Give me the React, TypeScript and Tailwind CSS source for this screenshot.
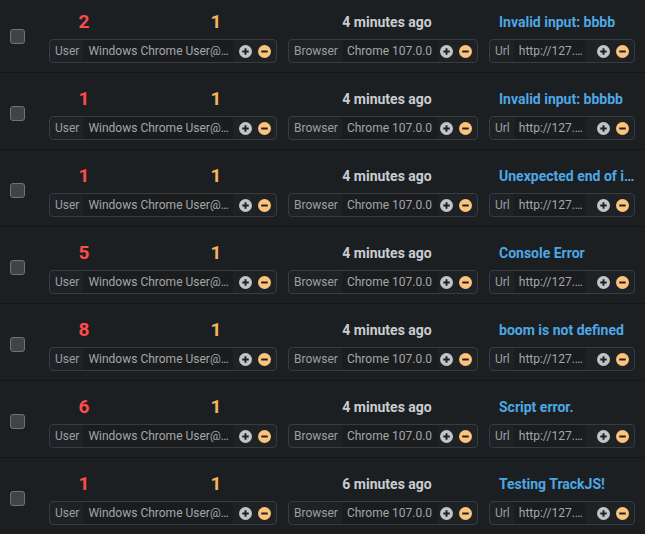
import React from "react"

type Row = {
  count: number
  users: number
  time: string
  message: string
}

const rows: Row[] = [
  { count: 2, users: 1, time: "4 minutes ago", message: "Invalid input: bbbb" },
  { count: 1, users: 1, time: "4 minutes ago", message: "Invalid input: bbbbb" },
  { count: 1, users: 1, time: "4 minutes ago", message: "Unexpected end of input" },
  { count: 5, users: 1, time: "4 minutes ago", message: "Console Error" },
  { count: 8, users: 1, time: "4 minutes ago", message: "boom is not defined" },
  { count: 6, users: 1, time: "4 minutes ago", message: "Script error." },
  { count: 1, users: 1, time: "6 minutes ago", message: "Testing TrackJS!" },
]

function PlusIcon() {
  return (
    <svg width="13" height="13" viewBox="0 0 16 16" className="shrink-0">
      <circle cx="8" cy="8" r="8" fill="#c2c5c8" />
      <path d="M8 4v8M4 8h8" stroke="#1d2022" strokeWidth="2.4" strokeLinecap="butt" />
    </svg>
  )
}

function MinusIcon() {
  return (
    <svg width="13" height="13" viewBox="0 0 16 16" className="shrink-0">
      <circle cx="8" cy="8" r="8" fill="#fcc37c" />
      <path d="M4 8h8" stroke="#1d2022" strokeWidth="2.4" />
    </svg>
  )
}

function Pill({ label, value, valueWidth }: { label: string; value: string; valueWidth: string }) {
  return (
    <div className="flex h-[24px] items-stretch rounded-[4px] border border-[#383b3f] bg-[#1f2224] text-[12px] leading-none">
      <span className="flex shrink-0 items-center pl-[5px] pr-[4px] text-[#9a9fa4]">{label}</span>
      <span className={`flex min-w-0 items-center bg-[#1a1c1e] pl-[5px] pr-[2px] text-[#a3a7ab] ${valueWidth}`}>
        <span className="truncate">{value}</span>
      </span>
      <span className="ml-auto flex shrink-0 items-center gap-[6px] pl-[2px] pr-[5px]">
        <PlusIcon />
        <MinusIcon />
      </span>
    </div>
  )
}

function ErrorRow({ row }: { row: Row }) {
  return (
    <div className="flex h-[77px] items-center border-b border-[#141618]">
      <div className="flex w-[49px] shrink-0 justify-start pl-[10px] pt-[4px]">
        <div className="h-[15px] w-[15px] rounded-[3px] border border-[#727272] bg-[#434343]" />
      </div>
      <div className="flex flex-col pt-[2px]">
        <div className="flex h-[30px] items-center font-bold">
          <div className="flex w-[228px] items-center">
            <span className="w-[70px] text-center text-[19px] text-[#ff4b4b]">{row.count}</span>
            <span className="ml-[67px] w-[60px] text-center text-[19px] text-[#fbb45e]">{row.users}</span>
          </div>
          <div className="ml-[11px] w-[190px] pl-[8px] text-center text-[14px] text-[#c9cdd1]">{row.time}</div>
          <div className="ml-[11px] w-[146px] truncate pl-[10px] text-[14px] text-[#4ea7e4]">{row.message}</div>
        </div>
        <div className="mt-[2px] flex items-center gap-[11px]">
          <div className="w-[228px]">
            <Pill label="User" value="Windows Chrome User@localhost" valueWidth="w-[150px]" />
          </div>
          <div className="w-[190px]">
            <Pill label="Browser" value="Chrome 107.0.0" valueWidth="flex-1" />
          </div>
          <div className="w-[146px]">
            <Pill label="Url" value="http://127.0.0.1:8080/" valueWidth="w-[72px]" />
          </div>
        </div>
      </div>
    </div>
  )
}

export default function App() {
  return (
    <div
      className="h-[534px] w-[645px] overflow-hidden bg-[#1c1f21]"
      style={{ fontFamily: "Roboto, 'Liberation Sans', sans-serif" }}
    >
      <div className="-mt-[4px]">
        {rows.map((row, i) => (
          <ErrorRow key={i} row={row} />
        ))}
      </div>
    </div>
  )
}
